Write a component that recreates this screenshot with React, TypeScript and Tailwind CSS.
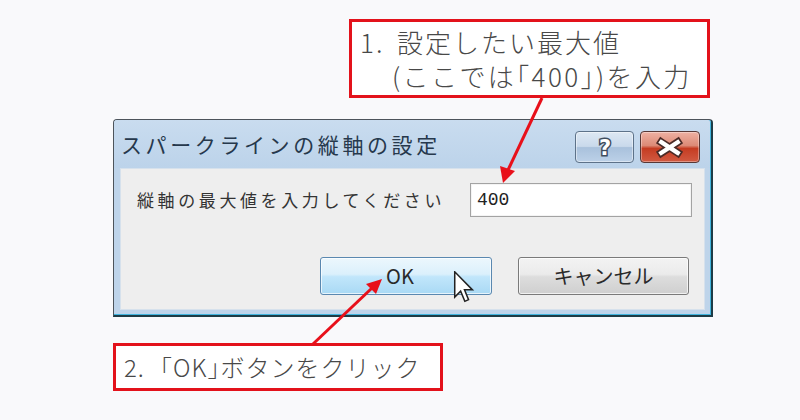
import React from "react";

function HelpButton() {
  return (
    <div className="relative w-[59px] h-[32px] rounded-[4px] border border-[#5d7289] bg-[linear-gradient(to_bottom,#dde8f3_0%,#c9d9eb_48%,#a9c1dc_52%,#bcd1e8_100%)] shadow-[inset_0_0_0_1px_rgba(255,255,255,0.45)] flex items-center justify-center">
      <svg width="20" height="26" viewBox="0 0 20 26">
        <text
          x="10"
          y="21"
          textAnchor="middle"
          fontFamily="'DejaVu Sans', sans-serif"
          fontWeight="bold"
          fontSize="21"
          fill="#ffffff"
          stroke="#3f4d5e"
          strokeWidth="3"
          paintOrder="stroke"
        >
          ?
        </text>
      </svg>
    </div>
  );
}

function CloseButton() {
  return (
    <div className="relative w-[60px] h-[32px] rounded-[4px] border border-[#573836] bg-[linear-gradient(to_bottom,#eeb1a3_0%,#dc8a76_45%,#c53c22_55%,#d15a42_100%)] shadow-[inset_0_0_0_1px_rgba(255,255,255,0.35)] flex items-center justify-center">
      <svg width="60" height="32" viewBox="0 0 60 32">
        <g strokeLinecap="square">
          <path d="M21 11 L38 22 M38 11 L21 22" stroke="#4a2a26" strokeWidth="8" />
          <path d="M21 11 L38 22 M38 11 L21 22" stroke="#ffffff" strokeWidth="4.5" />
        </g>
      </svg>
    </div>
  );
}

function Cursor() {
  return (
    <svg width="22" height="32" viewBox="0 0 12 19" className="absolute left-[132px] top-[13px]">
      <path
        d="M0.5 0.5 L0.5 15.5 L4 12 L6.5 18 L8.7 17 L6.3 11.2 L11 11.2 Z"
        fill="#ffffff"
        stroke="#222222"
        strokeWidth="0.9"
        strokeLinejoin="miter"
      />
    </svg>
  );
}

export default function App() {
  return (
    <div className="relative w-[800px] h-[420px] overflow-hidden bg-[#f9f9fb] flex flex-col items-start">
      {/* Callout 1 */}
      <div className="ml-[349px] mt-[19px] w-[361px] h-[79px] border-[3px] border-[#e3121b] bg-white pl-[5px] pt-[3px] text-[26px] leading-[34px] font-light text-[#484848] whitespace-nowrap [font-family:'Noto_Sans_CJK_JP',sans-serif]">
        <div className="flex">
          <span className="w-[40px] pl-[3px] tracking-[2px]">1.</span>
          <span className="tracking-[2px]">設定したい最大値</span>
        </div>
        <div className="pl-[35px] tracking-[2.4px]">(ここでは｢400｣)を入力</div>
      </div>

      {/* Dialog */}
      <div className="ml-[113px] mt-[21px] w-[600px] h-[198px] border-l border-t border-r-2 border-b-2 border-l-[#4d545b] border-t-[#4d545b] border-r-[#1d3c46] border-b-[#1d3c46] rounded-t-[4px] bg-[#bed4ea]">
        <div className="h-full border-r border-b border-[#41b4dd] rounded-t-[3px] flex flex-col">
          {/* Title bar */}
          <div className="h-[48px] shrink-0 flex items-start pl-[7px] pr-[10px] rounded-t-[3px] bg-[linear-gradient(to_bottom,#c9dcef_0%,#bcd3ea_100%)]">
            <div className="self-center flex-1 whitespace-nowrap text-[21px] leading-[26px] tracking-[3.6px] text-[#26384c] [font-family:'Noto_Sans_CJK_JP',sans-serif]">
              スパークラインの縦軸の設定
            </div>
            <div className="mt-[11px] flex gap-[6px]">
              <HelpButton />
              <CloseButton />
            </div>
          </div>
          {/* Body */}
          <div className="flex-1 ml-[6px] mr-[5px] mb-[4px] bg-[#eeeeee] border border-[#d6e1ec] flex flex-col">
            <div className="flex items-center justify-between pt-[14px] pl-[16px] pr-[12px]">
              <span className="whitespace-nowrap text-[17px] leading-[20px] tracking-[3.6px] text-[#333333] [font-family:'Noto_Sans_CJK_JP',sans-serif]">
                縦軸の最大値を入力してください
              </span>
              <div className="w-[222px] h-[34px] border border-[#a3a3a3] bg-white shadow-[inset_0_0_0_1px_#f4f4f4] flex items-center pl-[6px] text-[18px] text-[#222222] [font-family:'Liberation_Mono',monospace]">
                400
              </div>
            </div>
            <div className="mt-[40px] flex justify-end gap-[26px] pr-[15px]">
              <div className="relative w-[172px] h-[38px] rounded-[3px] border border-[#5a88b0] bg-[linear-gradient(to_bottom,#ecf7fd_0%,#dbf0fc_45%,#c1e6fb_52%,#a9d9f4_100%)] shadow-[inset_0_0_0_1px_rgba(255,255,255,0.7)] flex items-center justify-center text-[20px] text-[#2a2a2a] [font-family:'Noto_Sans_CJK_JP',sans-serif]">
                <span className="-ml-[12px]">OK</span>
                <Cursor />
              </div>
              <div className="w-[171px] h-[38px] rounded-[3px] border border-[#7a7a7a] bg-[linear-gradient(to_bottom,#f3f3f3_0%,#ebebeb_45%,#dddddd_52%,#cfcfcf_100%)] shadow-[inset_0_0_0_1px_rgba(255,255,255,0.7)] flex items-center justify-center text-[20px] text-[#2a2a2a] [font-family:'Noto_Sans_CJK_JP',sans-serif]">
                キャンセル
              </div>
            </div>
          </div>
        </div>
      </div>

      {/* Callout 2 */}
      <div className="ml-[113px] mt-[26px] w-[330px] h-[48px] border-[3px] border-[#e3121b] bg-white pl-[6px] flex items-center whitespace-nowrap text-[24px] leading-[30px] tracking-[1px] font-light text-[#484848] [font-family:'Noto_Sans_CJK_JP',sans-serif]">
        <span className="w-[38px] pl-[2px]">2.</span>
        <span>｢OK｣ボタンをクリック</span>
      </div>

      {/* Arrows overlay */}
      <svg className="absolute inset-0 pointer-events-none" width="800" height="420" viewBox="0 0 800 420">
        <g stroke="#e8101a" strokeWidth="3" fill="#e8101a">
          <line x1="542" y1="98" x2="508" y2="170" />
          <polygon points="503,183 500,166 515,171" stroke="none" />
          <line x1="313" y1="344" x2="372" y2="288" />
          <polygon points="382,279 366,284 376,294" stroke="none" />
        </g>
      </svg>
    </div>
  );
}
